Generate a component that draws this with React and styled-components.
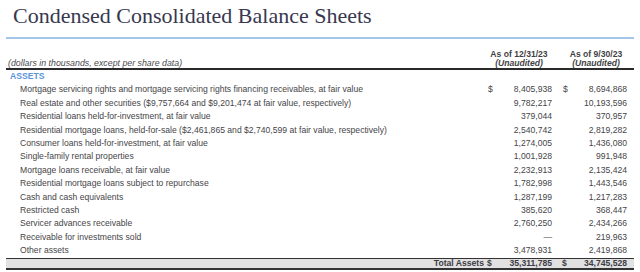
import React from "react";
import styled, { createGlobalStyle } from "styled-components";

const Global = createGlobalStyle`
  html, body { margin: 0; padding: 0; background: #fff; }
  body { width: 640px; height: 272px; overflow: hidden; }
`;

const Page = styled.div`
  width: 640px;
  height: 272px;
  box-sizing: border-box;
  padding: 0 6px;
  font-family: "Liberation Sans", Arial, sans-serif;
  color: #454548;
`;

const Title = styled.h1`
  margin: 0;
  height: 37px;
  box-sizing: border-box;
  padding: 1.5px 0 0 7px;
  font-family: "Liberation Serif", "Times New Roman", serif;
  font-weight: normal;
  font-size: 22px;
  line-height: 28px;
  color: #38384f;
`;

const BlueRule = styled.div`
  border-top: 2px solid #a3c7ea;
`;

const Grid = styled.div`
  display: grid;
  grid-template-columns: 1fr 75px 73px;
`;

const HeaderRow = styled.div`
  display: contents;
`;

const HeaderLabel = styled.div`
  height: 29px;
  display: flex;
  align-items: flex-end;
  padding-left: 2px;
  font-style: italic;
  font-size: 8.8px;
  line-height: 9px;
  color: #4a4a4d;
  border-bottom: 2px solid #2a2a2a;
`;

const HeaderCell = styled.div`
  height: 29px;
  display: flex;
  flex-direction: column;
  justify-content: flex-end;
  align-items: center;
  padding-right: ${(p) => p.$pr}px;
  font-weight: bold;
  font-size: 8.6px;
  line-height: 9px;
  color: #3f3f44;
  border-bottom: 2px solid #2a2a2a;
  & > em { font-style: italic; }
`;

const Section = styled.div`
  grid-column: 1 / -1;
  height: 13.4px;
  line-height: 13.4px;
  padding-left: 4px;
  font-size: 8.6px;
  font-weight: bold;
  color: #5b95dc;
`;

const Label = styled.div`
  height: 13.4px;
  line-height: 13.4px;
  padding-left: 14px;
  font-size: 8.6px;
  white-space: nowrap;
`;

const Value = styled.div`
  height: 13.4px;
  line-height: 13.4px;
  display: flex;
  justify-content: space-between;
  padding-left: 2px;
  padding-right: ${(p) => p.$pr}px;
  font-size: 8.6px;
`;

const TotalLabel = styled.div`
  margin-top: 1px;
  height: 9px;
  line-height: 9px;
  text-align: right;
  padding-right: 2px;
  font-weight: bold;
  font-size: 8.6px;
  color: #3c3c44;
  background: #e1e1e1;
  border-top: 1.5px solid #333;
  border-bottom: 2px solid #333;
`;

const TotalValue = styled(TotalLabel)`
  display: flex;
  justify-content: space-between;
  text-align: left;
  padding-left: 1px;
  padding-right: ${(p) => p.$pr}px;
`;

const rows = [
  ["Mortgage servicing rights and mortgage servicing rights financing receivables, at fair value", "8,405,938", "8,694,868", true],
  ["Real estate and other securities ($9,757,664 and $9,201,474 at fair value, respectively)", "9,782,217", "10,193,596"],
  ["Residential loans held-for-investment, at fair value", "379,044", "370,957"],
  ["Residential mortgage loans, held-for-sale ($2,461,865 and $2,740,599 at fair value, respectively)", "2,540,742", "2,819,282"],
  ["Consumer loans held-for-investment, at fair value", "1,274,005", "1,436,080"],
  ["Single-family rental properties", "1,001,928", "991,948"],
  ["Mortgage loans receivable, at fair value", "2,232,913", "2,135,424"],
  ["Residential mortgage loans subject to repurchase", "1,782,998", "1,443,546"],
  ["Cash and cash equivalents", "1,287,199", "1,217,283"],
  ["Restricted cash", "385,620", "368,447"],
  ["Servicer advances receivable", "2,760,250", "2,434,266"],
  ["Receivable for investments sold", "—", "219,963"],
  ["Other assets", "3,478,931", "2,419,868"],
];

export default function App() {
  return (
    <Page>
      <Global />
      <Title>Condensed Consolidated Balance Sheets</Title>
      <BlueRule />
      <Grid>
        <HeaderRow>
          <HeaderLabel>(dollars in thousands, except per share data)</HeaderLabel>
          <HeaderCell $pr={9}>
            <span>As of 12/31/23</span>
            <em>(Unaudited)</em>
          </HeaderCell>
          <HeaderCell $pr={3}>
            <span>As of 9/30/23</span>
            <em>(Unaudited)</em>
          </HeaderCell>
        </HeaderRow>
        <Section>ASSETS</Section>
        {rows.map(([label, a, b, dollar]) => (
          <React.Fragment key={label}>
            <Label>{label}</Label>
            <Value $pr={9}>
              <span>{dollar ? "$" : ""}</span>
              <span>{a}</span>
            </Value>
            <Value $pr={7}>
              <span>{dollar ? "$" : ""}</span>
              <span>{b}</span>
            </Value>
          </React.Fragment>
        ))}
        <TotalLabel>Total Assets</TotalLabel>
        <TotalValue $pr={9}>
          <span>$</span>
          <span>35,311,785</span>
        </TotalValue>
        <TotalValue $pr={7}>
          <span>$</span>
          <span>34,745,528</span>
        </TotalValue>
      </Grid>
    </Page>
  );
}
